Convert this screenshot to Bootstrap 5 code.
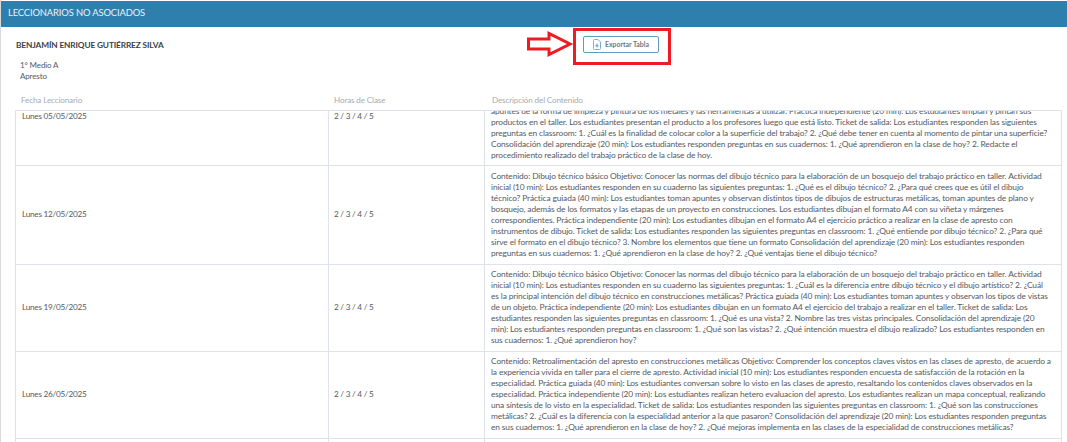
<!DOCTYPE html>
<html lang="es">
<head>
<meta charset="utf-8">
<title>Leccionarios no asociados</title>
<link href="https://cdn.jsdelivr.net/npm/bootstrap@5.3.0/dist/css/bootstrap.min.css" rel="stylesheet">
<style>
html,body{height:442px;overflow:hidden;background:#fff}
body{font-family:"Lato","Open Sans",sans-serif;font-size:8.4px;letter-spacing:-.13px;color:#55595f;border-left:1px solid #d9d9d9;position:relative}
.lp-head{background:#2e7fae;color:#e8f3f8;height:26px;margin-top:1px;padding-left:7px;font-size:9.4px;line-height:24px}
.lp-top{height:64px;padding:0 15px}
.lp-name{font-size:8.3px;font-weight:700;color:#3d4147;padding-top:12px;line-height:12px}
.lp-meta{padding:9px 0 0 4px;line-height:11px;font-size:8px}
.lp-export{position:absolute;left:582px;top:36px;width:76px;height:17px;border:1px solid #5b9cc1;border-radius:2px;background:#fff;font-size:6.9px;font-weight:700;color:#6d7782;display:flex;align-items:center;justify-content:center;gap:4px;padding:0}
.lp-mark{position:absolute;left:572px;top:28px;width:98px;height:37px;border:3px solid #ed1c24}
.lp-arrow{position:absolute;left:525px;top:31px}
.lp-wrap{margin:0 5px 0 14px}
.lp-table{table-layout:fixed;width:100%;border-collapse:collapse;margin:0}
.lp-table th{font-weight:400;color:#a6abb2;padding:0 5px 4px 6px;font-size:8.1px;line-height:11px;height:19px;vertical-align:bottom}
.lp-table th.lp-desc{padding-left:8px}
.lp-scroll{height:332px;overflow:hidden;border-top:1px solid #dfe2ea}
.lp-table.lp-body{margin-top:-44px}
.lp-table td{border:1px solid #dfe2ea;padding:4.25px 5px 4.25px 6px;line-height:11.1px;vertical-align:middle;white-space:nowrap}
.lp-table td.lp-short{font-size:8.2px;letter-spacing:-.25px}
.lp-table td.lp-hours{padding-left:5px}
.lp-table td.lp-first{padding-top:37.55px}
.lp-c1{width:313px}.lp-c2{width:156px}
</style>
</head>
<body>
<div class="lp-head">LECCIONARIOS NO ASOCIADOS</div>
<div class="lp-top">
  <div class="lp-name">BENJAMÍN ENRIQUE GUTIÉRREZ SILVA</div>
  <div class="lp-meta">1° Medio A<br>Apresto</div>
</div>
<button type="button" class="lp-export">
  <svg width="8" height="11" viewBox="0 0 8 11" fill="none" stroke="#7fb0cf" stroke-width="1"><path d="M.5 1.5Q.5 .5 1.5 .5H5L7.5 3V9.5Q7.5 10.5 6.5 10.5H1.5Q.5 10.5 .5 9.5Z"/><path d="M4 4.5V8.5M2.3 6.8H5.7" stroke="#5b9cc1"/></svg>
  Exportar Tabla
</button>
<div class="lp-mark"></div>
<svg class="lp-arrow" width="48" height="26" viewBox="0 0 48 26" fill="#fff" stroke="#ed1c24" stroke-width="3"><path d="M2.5 8H23V2.5L44 13L23 23.5V18H2.5Z"/></svg>
<div class="lp-wrap">
  <table class="lp-table">
    <colgroup><col class="lp-c1"><col class="lp-c2"><col></colgroup>
    <thead><tr><th>Fecha Leccionario</th><th>Horas de Clase</th><th class="lp-desc">Descripción del Contenido</th></tr></thead>
  </table>
  <div class="lp-scroll">
    <table class="lp-table lp-body">
      <colgroup><col class="lp-c1"><col class="lp-c2"><col></colgroup>
      <tbody>
        <tr>
          <td class="lp-short">Lunes 05/05/2025</td><td class="lp-short lp-hours">2 / 3 / 4 / 5</td>
          <td class="lp-first">apuntes de la forma de limpieza y pintura de los metales y las herramientas a utilizar. Práctica independiente (20 min): Los estudiantes limpian y pintan sus<br>productos en el taller. Los estudiantes presentan el producto a los profesores luego que está listo. Ticket de salida: Los estudiantes responden las siguientes<br>preguntas en classroom: 1. ¿Cuál es la finalidad de colocar color a la superficie del trabajo? 2. ¿Qué debe tener en cuenta al momento de pintar una superficie?<br>Consolidación del aprendizaje (20 min): Los estudiantes responden preguntas en sus cuadernos: 1. ¿Qué aprendieron en la clase de hoy? 2. Redacte el<br>procedimiento realizado del trabajo práctico de la clase de hoy.</td>
        </tr>
        <tr>
          <td class="lp-short">Lunes 12/05/2025</td><td class="lp-short lp-hours">2 / 3 / 4 / 5</td>
          <td>Contenido: Dibujo técnico básico Objetivo: Conocer las normas del dibujo técnico para la elaboración de un bosquejo del trabajo práctico en taller. Actividad<br>inicial (10 min): Los estudiantes responden en su cuaderno las siguientes preguntas: 1. ¿Qué es el dibujo técnico? 2. ¿Para qué crees que es útil el dibujo<br>técnico? Práctica guiada (40 min): Los estudiantes toman apuntes y observan distintos tipos de dibujos de estructuras metálicas, toman apuntes de plano y<br>bosquejo, además de los formatos y las etapas de un proyecto en construcciones. Los estudiantes dibujan el formato A4 con su viñeta y márgenes<br>correspondientes. Práctica independiente (20 min): Los estudiantes dibujan en el formato A4 el ejercicio práctico a realizar en la clase de apresto con<br>instrumentos de dibujo. Ticket de salida: Los estudiantes responden las siguientes preguntas en classroom: 1. ¿Qué entiende por dibujo técnico? 2. ¿Para qué<br>sirve el formato en el dibujo técnico? 3. Nombre los elementos que tiene un formato Consolidación del aprendizaje (20 min): Los estudiantes responden<br>preguntas en sus cuadernos: 1. ¿Qué aprendieron en la clase de hoy? 2. ¿Qué ventajas tiene el dibujo técnico?</td>
        </tr>
        <tr>
          <td class="lp-short">Lunes 19/05/2025</td><td class="lp-short lp-hours">2 / 3 / 4 / 5</td>
          <td>Contenido: Dibujo técnico básico Objetivo: Conocer las normas del dibujo técnico para la elaboración de un bosquejo del trabajo práctico en taller. Actividad<br>inicial (10 min): Los estudiantes responden en su cuaderno las siguientes preguntas: 1. ¿Cuál es la diferencia entre dibujo técnico y el dibujo artístico? 2. ¿Cuál<br>es la principal intención del dibujo técnico en construcciones metálicas? Práctica guiada (40 min): Los estudiantes toman apuntes y observan los tipos de vistas<br>de un objeto. Práctica independiente (20 min): Los estudiantes dibujan en un formato A4 el ejercicio del trabajo a realizar en el taller. Ticket de salida: Los<br>estudiantes responden las siguientes preguntas en classroom: 1. ¿Qué es una vista? 2. Nombre las tres vistas principales. Consolidación del aprendizaje (20<br>min): Los estudiantes responden preguntas en classroom: 1. ¿Qué son las vistas? 2. ¿Qué intención muestra el dibujo realizado? Los estudiantes responden en<br>sus cuadernos: 1. ¿Qué aprendieron hoy?</td>
        </tr>
        <tr>
          <td class="lp-short">Lunes 26/05/2025</td><td class="lp-short lp-hours">2 / 3 / 4 / 5</td>
          <td>Contenido: Retroalimentación del apresto en construcciones metálicas Objetivo: Comprender los conceptos claves vistos en las clases de apresto, de acuerdo a<br>la experiencia vivida en taller para el cierre de apresto. Actividad inicial (10 min): Los estudiantes responden encuesta de satisfacción de la rotación en la<br>especialidad. Práctica guiada (40 min): Los estudiantes conversan sobre lo visto en las clases de apresto, resaltando los contenidos claves observados en la<br>especialidad. Práctica independiente (20 min): Los estudiantes realizan hetero evaluacion del apresto. Los estudiantes realizan un mapa conceptual, realizando<br>una síntesis de lo visto en la especialidad. Ticket de salida: Los estudiantes responden las siguientes preguntas en classroom: 1. ¿Qué son las construcciones<br>metálicas? 2. ¿Cuál es la diferencia con la especialidad anterior a la que pasaron? Consolidación del aprendizaje (20 min): Los estudiantes responden preguntas<br>en sus cuadernos: 1. ¿Qué aprendieron en la clase de hoy? 2. ¿Qué mejoras implementa en las clases de la especialidad de construcciones metálicas?</td>
        </tr>
        <tr><td>&nbsp;</td><td></td><td>&nbsp;</td></tr>
      </tbody>
    </table>
  </div>
</div>
<script src="https://cdn.jsdelivr.net/npm/bootstrap@5.3.0/dist/js/bootstrap.bundle.min.js"></script>
</body>
</html>
